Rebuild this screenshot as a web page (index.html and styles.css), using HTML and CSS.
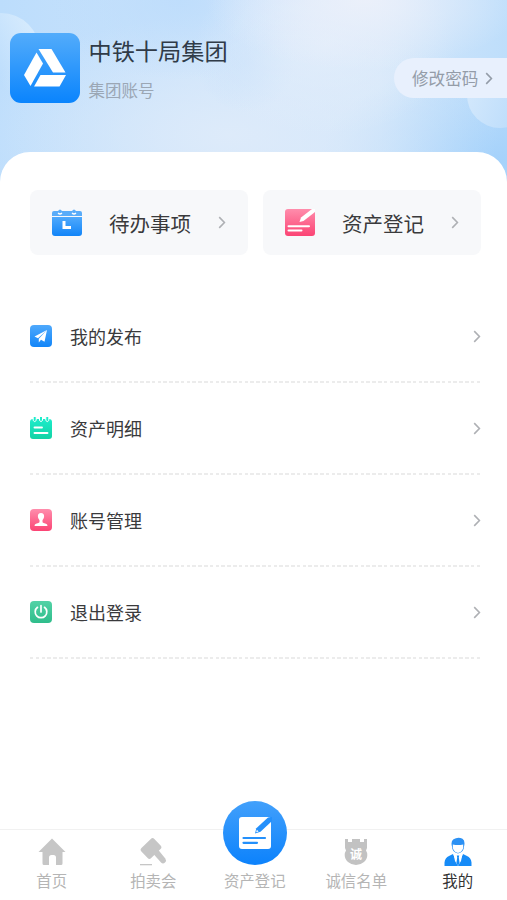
FILE: index.html
```html
<!DOCTYPE html>
<html lang="zh-CN">
<head>
<meta charset="utf-8">
<meta name="viewport" content="width=device-width, initial-scale=1">
<title>我的</title>
<link rel="stylesheet" href="styles.css">
</head>
<body>
<svg width="0" height="0" class="defs" aria-hidden="true">
  <defs>
    <linearGradient id="blue" x1="0" y1="0" x2="0" y2="1"><stop offset="0" stop-color="#4fa9fc"/><stop offset="1" stop-color="#1285f8"/></linearGradient>
    <linearGradient id="pink" x1="0" y1="0" x2="0" y2="1"><stop offset="0" stop-color="#ff8dac"/><stop offset="1" stop-color="#fb4474"/></linearGradient>
    <linearGradient id="teal" x1="0" y1="0" x2="0" y2="1"><stop offset="0" stop-color="#1ceccb"/><stop offset="1" stop-color="#12d2a4"/></linearGradient>
    <linearGradient id="green" x1="0" y1="0" x2="0" y2="1"><stop offset="0" stop-color="#53d2a6"/><stop offset="1" stop-color="#2fbd8b"/></linearGradient>
    <symbol id="chevron" viewBox="0 0 8 14"><path d="M1 1.2 6.6 7 1 12.8" fill="none" stroke="currentColor" stroke-width="1.7"/></symbol>
  </defs>
</svg>
<div class="page">
  <header class="hero">
    <span class="bubble bubble-left"></span>
    <span class="bubble bubble-right"></span>
    <div class="avatar">
      <svg width="70" height="70" viewBox="0 0 70 70" fill="#fff">
        <path d="M28.5 16H41.5L55.5 39.5H43Z"/>
        <path d="M26.5 19.5 33 30.5 20.5 53 14 42Z"/>
        <path d="M30.5 42H56L49.5 53.5H24Z"/>
      </svg>
    </div>
    <div class="identity">
      <h1>中铁十局集团</h1>
      <p>集团账号</p>
    </div>
    <a class="password">修改密码<svg class="chev" width="8" height="13"><use href="#chevron"/></svg></a>
  </header>

  <main class="sheet">
    <div class="cards">
      <a class="card">
        <svg class="card-icon" width="30" height="27" viewBox="0 0 30 27">
          <path d="M2 2H6Q8 -1 10 2H20Q22 -1 24 2H28Q30 2 30 4V7H0V4Q0 2 2 2Z" fill="#59acf9"/>
          <path d="M0 8H30V24Q30 27 27 27H3Q0 27 0 24Z" fill="url(#blue)"/>
          <path d="M6 4Q8 6 10 4M20 4Q22 6 24 4" fill="none" stroke="#fff" stroke-width="1.2"/>
          <path d="M12 12V18.5H19" fill="none" stroke="#fff" stroke-width="3"/>
        </svg>
        <span>待办事项</span>
        <svg class="chev" width="8" height="13"><use href="#chevron"/></svg>
      </a>
      <a class="card">
        <svg class="card-icon" width="30" height="27" viewBox="0 0 30 27">
          <rect width="30" height="27" rx="3" fill="url(#pink)"/>
          <path d="M14.5 13 16 8.5 27 0H30V3L18.5 12Z" fill="#fff"/>
          <path d="M3.5 17.2H24M3.5 21.5H16.5" stroke="#fff" stroke-width="2" stroke-linecap="round"/>
        </svg>
        <span>资产登记</span>
        <svg class="chev" width="8" height="13"><use href="#chevron"/></svg>
      </a>
    </div>

    <ul class="menu">
      <li>
        <svg width="22" height="22" viewBox="0 0 22 22">
          <rect width="22" height="22" rx="4" fill="url(#blue)"/>
          <path d="M17 5 4.5 11.5 8 13.2ZM17 5 8.8 13.8V17.5L11 14.8 14.5 16.7Z" fill="#fff"/>
        </svg>
        <span>我的发布</span>
        <svg class="chev" width="8" height="13"><use href="#chevron"/></svg>
      </li>
      <li>
        <svg width="22" height="22" viewBox="0 0 22 22">
          <path d="M3 2H19Q22 2 22 5V19Q22 22 19 22H3Q0 22 0 19V5Q0 2 3 2Z" fill="url(#teal)"/>
          <path d="M3.2 0V3.5Q4.7 5.8 6.2 3.5V0M9.5 0V3.5Q11 5.8 12.5 3.5V0M15.8 0V3.5Q17.3 5.8 18.8 3.5V0" fill="#1ceccb" stroke="#fff" stroke-width="1"/>
          <path d="M4.5 10.5H12M4.5 16H17.5" stroke="#fff" stroke-width="1.9" stroke-linecap="round"/>
        </svg>
        <span>资产明细</span>
        <svg class="chev" width="8" height="13"><use href="#chevron"/></svg>
      </li>
      <li>
        <svg width="22" height="22" viewBox="0 0 22 22">
          <rect width="22" height="22" rx="4" fill="url(#pink)"/>
          <path d="M11 4C13.3 4 14.2 5.5 14.1 7.5 14 9.4 13 10.5 12.5 11.2V13.2Q13 14 16 14.7 17.5 15.2 17.5 17H4.5Q4.5 15.2 6 14.7 9 14 9.5 13.2V11.2C9 10.5 8 9.4 7.9 7.5 7.8 5.5 8.7 4 11 4Z" fill="#fff"/>
        </svg>
        <span>账号管理</span>
        <svg class="chev" width="8" height="13"><use href="#chevron"/></svg>
      </li>
      <li>
        <svg width="22" height="22" viewBox="0 0 22 22">
          <rect width="22" height="22" rx="4" fill="url(#green)"/>
          <path d="M7.5 6.3A5.8 5.8 0 1 0 14.5 6.3M11 4.5V11" fill="none" stroke="#fff" stroke-width="1.7" stroke-linecap="round"/>
        </svg>
        <span>退出登录</span>
        <svg class="chev" width="8" height="13"><use href="#chevron"/></svg>
      </li>
    </ul>
  </main>

  <nav class="tabs">
    <a class="tab">
      <svg width="28" height="28" viewBox="0 0 28 28" fill="#c6c6c6"><path d="M14 .5 27.5 14H24.5V25.5Q24.5 27 23 27H18V19.5Q18 17 15.5 17H13.5Q11 17 11 19.5V27H6Q4.5 27 4.5 25.5V14H.5Z"/></svg>
      <span>首页</span>
    </a>
    <a class="tab">
      <svg width="28" height="28" viewBox="0 0 28 28" fill="#c6c6c6">
        <rect x="-9" y="-7" width="18" height="14" rx="2.5" transform="translate(12 10.5) rotate(-44)"/>
        <path d="M14.5 16 19 11.5 26.3 20.5Q27.8 22.5 26 24.5 24 26.5 22 24.5Z"/>
        <rect x="1" y="26" width="12" height="1.3"/>
      </svg>
      <span>拍卖会</span>
    </a>
    <a class="tab">
      <span class="disc">
        <svg width="34" height="34" viewBox="0 0 34 34">
          <rect x="1" y="1" width="32" height="32" rx="3" fill="#fff"/>
          <path d="M17 17.5 18.3 12.3 30 1.5 34 1V5L22.5 15.8Z" fill="#2490fb"/>
          <path d="M18.2 16.2 18.8 13.8 20.6 15.6Z" fill="#fff"/>
          <path d="M5.5 22H27M5.5 26.8H19" stroke="#2490fb" stroke-width="2.2" stroke-linecap="round"/>
        </svg>
      </span>
      <span>资产登记</span>
    </a>
    <a class="tab">
      <svg width="28" height="28" viewBox="0 0 28 28">
        <path d="M3 1H6V4H10V1H18V4H22V1H25V10L24 12.5Q25.3 14.5 25.3 17A11.3 10 0 0 1 2.7 17Q2.7 14.5 4 12.5L3 10Z" fill="#c2c2c2"/>
        <text x="14" y="21" class="seal">诚</text>
      </svg>
      <span>诚信名单</span>
    </a>
    <a class="tab active">
      <svg width="28" height="30" viewBox="0 0 28 30">
        <path d="M8 9.5Q6.5 4.5 9.5 2.3 14 -.5 18.5 1.8 21.5 4 20 9.5 20 15 14 16.5 8 15 8 9.5Z" fill="#2c91f4"/>
        <path d="M8.8 7.5Q14 8.5 19.2 7.5Q20 14.5 14 16 8 14.5 8.8 7.5Z" fill="#fff"/>
        <path d="M.5 29V25.5Q1 20.5 5 19L9 17 14 28 19 17 23 19Q27 20.5 27.5 25.5V29Z" fill="#168bf7"/>
        <path d="M9.5 17 14 18.5 18.5 17 17 24 14 29 11 24Z" fill="#fff"/>
        <path d="M12.8 18.5H15.2L14.8 20.5 15.6 26 14 29 12.4 26 13.2 20.5Z" fill="#168bf7"/>
      </svg>
      <span>我的</span>
    </a>
  </nav>
</div>
</body>
</html>
```
FILE: styles.css
```css
* { box-sizing: border-box; }

body {
  margin: 0;
  background: #fff;
  color: #3a3a3c;
  font-family: "Noto Sans CJK SC", "Noto Sans", sans-serif;
}

.defs { position: absolute; }

.page {
  width: 507px;
  height: 900px;
  display: flex;
  flex-direction: column;
  overflow: hidden;
}

.hero {
  position: relative;
  flex: none;
  height: 192px;
  padding: 33px 0 0 10px;
  display: flex;
  align-items: flex-start;
  overflow: hidden;
  background:
    radial-gradient(ellipse 160px 70px at 365px 0, rgba(238, 241, 250, .85), rgba(235, 241, 251, 0)),
    radial-gradient(ellipse 130px 90px at 325px 45px, rgba(230, 239, 251, .7), rgba(230, 239, 251, 0)),
    radial-gradient(ellipse 50px 50px at 245px 62px, rgba(200, 225, 251, .7), rgba(200, 225, 251, 0)),
    radial-gradient(ellipse 130px 80px at 180px 0, rgba(188, 220, 252, .8), rgba(188, 220, 252, 0)),
    radial-gradient(ellipse 270px 120px at 230px 135px, rgba(222, 235, 250, .95), rgba(222, 235, 250, 0)),
    radial-gradient(ellipse 180px 100px at 500px 160px, #a5d2fb, rgba(165, 210, 251, 0)),
    linear-gradient(90deg, #bcddfc 0, #d0e5fb 50%, #d4e7fa 75%, #bedefb 100%);
}

.bubble { position: absolute; border-radius: 50%; }

.bubble-left {
  left: -38px;
  top: 13px;
  width: 78px;
  height: 78px;
  background: linear-gradient(60deg, rgba(255, 255, 255, 0) 35%, rgba(235, 246, 255, .65));
}

.bubble-right {
  left: 467px;
  top: 62px;
  width: 66px;
  height: 66px;
  background: linear-gradient(110deg, #d7eafc, #b5d9fb);
}

.avatar {
  position: relative;
  width: 70px;
  height: 70px;
  border-radius: 11px;
  background: linear-gradient(#53acfb, #0a84fd);
}

.avatar svg { display: block; }

.identity { margin-left: 8.5px; }

.identity h1 {
  margin: 1px 0 0;
  font-size: 23.2px;
  line-height: 32px;
  font-weight: 400;
  color: #303b48;
}

.identity p {
  margin: 12px 0 0;
  font-size: 16.5px;
  line-height: 24px;
  color: #9ba7b5;
}

.password {
  position: relative;
  display: flex;
  align-items: center;
  gap: 7px;
  width: 113px;
  height: 40px;
  margin: 25px 0 0 auto;
  padding: 0 0 0 18px;
  border-radius: 20px 0 0 20px;
  background: #e8f0fd;
  font-size: 16.6px;
  line-height: 40px;
  white-space: nowrap;
  color: #949ca8;
}

.password .chev { color: #949ca8; }

.sheet {
  position: relative;
  flex: 1;
  margin-top: -40px;
  padding: 38px 26px 0 30px;
  border-radius: 30px 30px 0 0;
  background: #fff;
}

.cards {
  display: grid;
  grid-template-columns: 1fr 1fr;
  gap: 15px;
}

.card {
  height: 65px;
  padding: 0 22px;
  display: flex;
  align-items: center;
  border-radius: 8px;
  background: #f7f8fa;
  font-size: 20.5px;
}

.card span { margin-left: 27px; line-height: 30px; }
.card .chev { margin-left: auto; }

.chev { flex: none; color: #aeb0b4; }

.menu {
  margin: 36px 0 0;
  padding: 0;
  list-style: none;
}

.menu li {
  display: flex;
  align-items: center;
  height: 92px;
  padding-bottom: 2px;
  font-size: 18px;
  background: repeating-linear-gradient(90deg, #ececec 0 3.5px, transparent 3.5px 5.8px) 0 100% / 100% 2px no-repeat;
}

.menu li span { margin-left: 18px; line-height: 26px; }
.menu .chev { margin-left: auto; }

.tabs {
  position: relative;
  flex: none;
  display: grid;
  grid-template-columns: repeat(5, 101.5px);
  grid-template-rows: 70px;
  height: 71px;
  padding-left: 1px;
  border-top: 1px solid #f1f1f1;
  background: #fff;
}

.tab {
  display: flex;
  flex-direction: column;
  align-items: center;
  justify-content: flex-end;
  min-width: 0;
  padding-bottom: 9px;
  font-size: 15.4px;
  line-height: 22px;
  color: #b5b5b5;
}

.tab svg { flex: none; margin-bottom: 3px; }
.tab.active { color: #333; }
.tab.active svg { margin-bottom: 2px; }

.disc {
  display: grid;
  place-items: center;
  flex: none;
  width: 64px;
  height: 64px;
  margin-bottom: 4px;
  border-radius: 50%;
  background: linear-gradient(#42a0fb, #0c82fc);
}

.tab .disc svg { margin: 0; }

.seal {
  fill: #fff;
  font-size: 12px;
  font-weight: 700;
  line-height: 1;
  text-anchor: middle;
}
```
